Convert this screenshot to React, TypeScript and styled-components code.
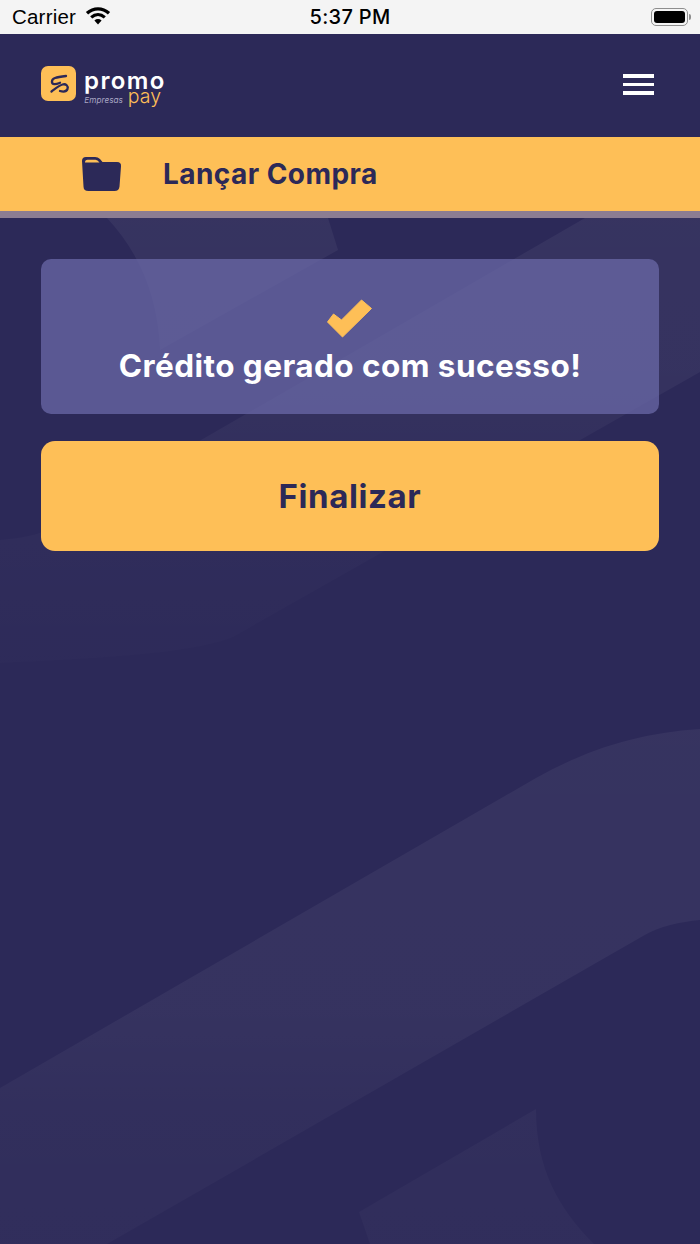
import * as React from "react"
import styled, { createGlobalStyle } from "styled-components"

const NAVY = "#2c2958"
const YELLOW = "#febf57"

const GlobalStyle = createGlobalStyle`
  html, body {
    margin: 0;
    padding: 0;
    background: ${NAVY};
  }
  * {
    box-sizing: border-box;
  }
`

const App = () => (
  <Page>
    <GlobalStyle />
    <StatusBar>
      <Carrier>
        Carrier
        <WifiIcon width="26" height="19" viewBox="0 0 26 19" fill="none">
          <path d="M2 7.2C8.6 1.4 17.4 1.4 24 7.2" stroke="#000" strokeWidth="3.4" />
          <path d="M6.2 11.4C10.4 7.7 15.6 7.7 19.8 11.4" stroke="#000" strokeWidth="3.2" />
          <path d="M9.4 14.4C11.6 12.6 14.4 12.6 16.6 14.4L13 18.4Z" fill="#000" />
        </WifiIcon>
      </Carrier>
      <Clock>5:37 PM</Clock>
      <BatteryWrap>
        <Battery>
          <BatteryFill />
        </Battery>
        <BatteryNub />
      </BatteryWrap>
    </StatusBar>

    <Header>
      <Logo>
        <LogoMark>
          <svg width="35" height="35" viewBox="0 0 35 35" fill="none">
            <path
              d="M25 10C21 10.500 17 11 14 12C10 13.500 10 18 13.500 18.200C15.500 18.300 17.500 17.400 19 16.800"
              stroke={NAVY}
              strokeWidth="2.300"
              strokeLinecap="round"
            />
            <path
              d="M10.500 25.500C14 23 18 19.500 21.500 18.500C25 17.500 27.500 20 26.500 23C25.500 25.500 22.500 26 19 25"
              stroke={NAVY}
              strokeWidth="2.300"
              strokeLinecap="round"
            />
          </svg>
        </LogoMark>
        <Wordmark>
          <Promo>promo</Promo>
          <SubRow>
            <Empresas>Empresas</Empresas>
            <Pay>pay</Pay>
          </SubRow>
        </Wordmark>
      </Logo>
      <Burger aria-label="menu">
        <BurgerBar />
        <BurgerBar />
        <BurgerBar />
      </Burger>
    </Header>

    <TitleBar>
      <svg width="41" height="36" viewBox="0 0 41 36">
        <path
          d="M1 5Q1 1 5 1H14Q17 1 19 3L21.500 6H36Q40.500 6 40 10.500L38.500 30.500Q38 35 33.500 35H7.500Q2.500 35 2.500 30.500Z"
          fill={NAVY}
        />
        <path d="M4 6.500Q4 3.800 6.500 3.800H14.500Q16.500 3.800 18.500 6.500Z" fill={YELLOW} />
      </svg>
      <PageTitle>Lançar Compra</PageTitle>
    </TitleBar>

    <Main>
      <Backdrop viewBox="0 0 700 1026" preserveAspectRatio="none">
        <defs>
          <linearGradient id="upperFade" gradientUnits="userSpaceOnUse" x1="0" y1="0" x2="0" y2="440">
            <stop offset="0" stopColor="#fff" stopOpacity="0.05" />
            <stop offset="0.35" stopColor="#fff" stopOpacity="0.045" />
            <stop offset="0.7" stopColor="#fff" stopOpacity="0.02" />
            <stop offset="1" stopColor="#fff" stopOpacity="0.009" />
          </linearGradient>
          <linearGradient id="lowerFade" gradientUnits="userSpaceOnUse" x1="0" y1="510" x2="0" y2="1026">
            <stop offset="0" stopColor="#fff" stopOpacity="0.05" />
            <stop offset="0.55" stopColor="#fff" stopOpacity="0.046" />
            <stop offset="0.75" stopColor="#fff" stopOpacity="0.028" />
            <stop offset="1" stopColor="#fff" stopOpacity="0.022" />
          </linearGradient>
        </defs>
        <path d="M107 0H328L338 32L160 132C158 80 140 35 107 0Z" fill="url(#upperFade)" />
        <path
          d="M585 0H700V154L233 419C190 436 100 440 0 445V322C20 320 32 318 42 314Z"
          fill="url(#upperFade)"
        />
        <path
          d="M0 870V1026H107L643 718C660 708 680 704 700 702V511C640 515 590 530 536 560Z"
          fill="url(#lowerFade)"
        />
        <path d="M359 994L536 891C536 950 558 990 594 1026H370Z" fill="url(#lowerFade)" />
      </Backdrop>

      <Card>
        <svg width="46" height="39" viewBox="0.5 0 46 39">
          <path
            d="M1 23L7 15L15 21L35 1L45 9.500L16 38Z"
            fill={YELLOW}
            stroke={YELLOW}
            strokeWidth="1"
            strokeLinejoin="round"
          />
        </svg>
        <CardText>Crédito gerado com sucesso!</CardText>
      </Card>

      <FinishButton>Finalizar</FinishButton>
    </Main>
  </Page>
)

export default App

const Page = styled.div`
  display: flex;
  flex-direction: column;
  width: 700px;
  height: 1244px;
  overflow: hidden;
  background: ${NAVY};
  font-family: Inter, "Liberation Sans", sans-serif;
`

const StatusBar = styled.div`
  display: grid;
  grid-template-columns: 1fr auto 1fr;
  align-items: center;
  height: 34px;
  padding: 0 9px;
  background: #f4f4f4;
  color: #000;
  font-family: "Liberation Sans", sans-serif;
`

const Carrier = styled.div`
  display: flex;
  align-items: center;
  gap: 9px;
  padding-left: 3px;
  font-size: 20.500px;
  letter-spacing: 0.2px;
`

const WifiIcon = styled.svg`
  margin-bottom: 3px;
`

const Clock = styled.div`
  font-family: Inter, "Liberation Sans", sans-serif;
  font-size: 20px;
  font-weight: 500;
  letter-spacing: 0.3px;
`

const BatteryWrap = styled.div`
  display: flex;
  align-items: center;
  justify-content: flex-end;
  gap: 1px;
`

const Battery = styled.div`
  width: 37px;
  height: 18px;
  padding: 2px;
  border: 1px solid #8e8e8e;
  border-radius: 5px;
`

const BatteryFill = styled.div`
  height: 100%;
  background: #000;
  border-radius: 3px;
`

const BatteryNub = styled.div`
  width: 2px;
  height: 6px;
  background: #8e8e8e;
  border-radius: 0 2px 2px 0;
`

const Header = styled.header`
  display: flex;
  align-items: flex-start;
  justify-content: space-between;
  height: 103px;
  padding: 32px 46px 0 41px;
`

const Logo = styled.div`
  display: flex;
  align-items: flex-start;
  gap: 8px;
`

const LogoMark = styled.div`
  display: flex;
  width: 35px;
  height: 35px;
  background: ${YELLOW};
  border-radius: 7px;
`

const Wordmark = styled.div`
  display: flex;
  flex-direction: column;
  width: 82px;
  margin-top: 6px;
`

const Promo = styled.div`
  color: #fff;
  font-size: 24px;
  font-weight: 600;
  line-height: 17px;
  letter-spacing: 1.400px;
`

const SubRow = styled.div`
  display: flex;
  align-items: baseline;
  justify-content: flex-end;
  gap: 5px;
  margin-top: 1px;
  padding-right: 5px;
`

const Empresas = styled.span`
  color: #a9a7c4;
  font-size: 8.200px;
  font-style: italic;
  line-height: 12px;
`

const Pay = styled.span`
  color: ${YELLOW};
  font-size: 19.500px;
  font-weight: 300;
  line-height: 12px;
`

const Burger = styled.div`
  display: flex;
  flex-direction: column;
  gap: 5px;
  width: 31px;
  margin-top: 8px;
`

const BurgerBar = styled.span`
  display: block;
  height: 3.500px;
  background: #fff;
`

const TitleBar = styled.div`
  display: flex;
  align-items: center;
  gap: 41px;
  height: 81px;
  padding-left: 81px;
  background: ${YELLOW};
  border-bottom: 7px solid #8c7d92;
`

const PageTitle = styled.h1`
  margin: 0;
  color: ${NAVY};
  font-size: 28px;
  font-weight: 700;
  letter-spacing: 0.45px;
`

const Main = styled.main`
  position: relative;
  flex: 1;
  display: flex;
  flex-direction: column;
  gap: 27px;
  padding: 41px;
`

const Backdrop = styled.svg`
  position: absolute;
  top: 0;
  left: 0;
  width: 700px;
  height: 1026px;
`

const Card = styled.div`
  position: relative;
  display: flex;
  flex-direction: column;
  align-items: center;
  gap: 9px;
  height: 155px;
  padding-top: 40px;
  background: rgba(110, 108, 172, 0.7);
  border-radius: 10px;
`

const CardText = styled.div`
  color: #fff;
  font-size: 31.500px;
  font-weight: 700;
  line-height: 38px;
  letter-spacing: 0.45px;
`

const FinishButton = styled.button`
  position: relative;
  height: 110px;
  padding: 0;
  border: 0;
  border-radius: 14px;
  background: ${YELLOW};
  color: ${NAVY};
  font-family: inherit;
  font-size: 33px;
  font-weight: 700;
  letter-spacing: 0.6px;
`
